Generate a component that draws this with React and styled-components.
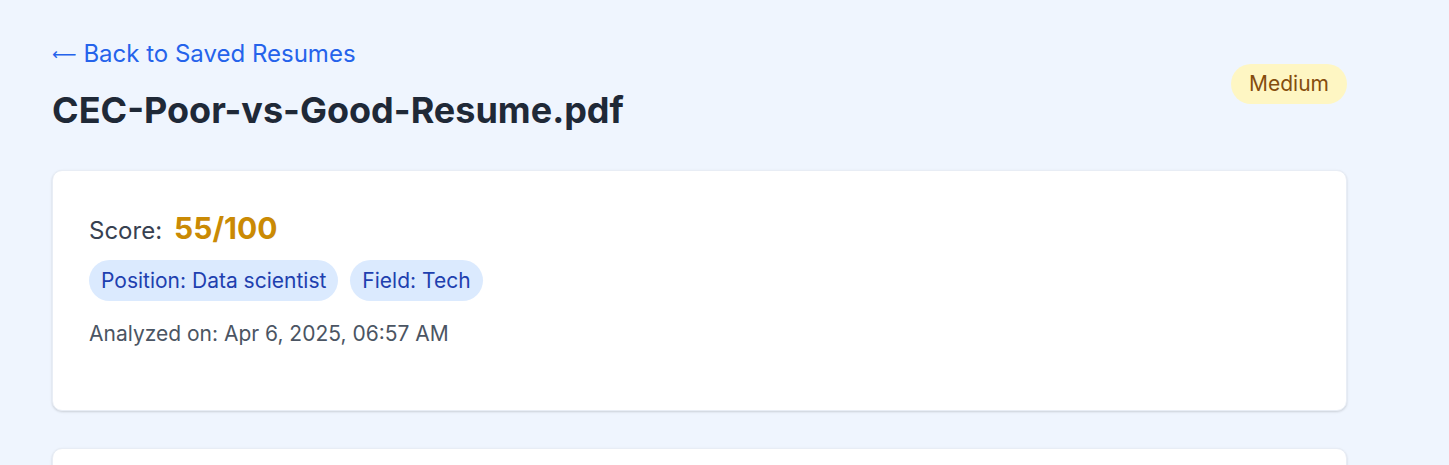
import React from 'react';
import styled, { createGlobalStyle } from 'styled-components';

const resume = {
    name: 'CEC-Poor-vs-Good-Resume.pdf',
    level: 'Medium',
    score: 55,
    position: 'Data scientist',
    field: 'Tech',
    analyzedOn: 'Apr 6, 2025, 06:57 AM',
};

const App = () => {
    return (
        <>
            <GlobalStyle />
            <Page>
                <Header>
                    <TitleBlock>
                        <BackLink href="#">
                            <Arrow>⟵</Arrow>Back to Saved Resumes
                        </BackLink>
                        <Title>{resume.name}</Title>
                    </TitleBlock>
                    <LevelBadge>{resume.level}</LevelBadge>
                </Header>

                {/* Summary card */}
                <Card>
                    <ScoreRow>
                        <ScoreLabel>Score:</ScoreLabel>
                        <ScoreValue>{resume.score}/100</ScoreValue>
                    </ScoreRow>
                    <ChipRow>
                        <Chip>Position: {resume.position}</Chip>
                        <Chip>Field: {resume.field}</Chip>
                    </ChipRow>
                    <Meta>Analyzed on: {resume.analyzedOn}</Meta>
                </Card>

                {/* Next card, cut off by the window */}
                <Card $empty />
            </Page>
        </>
    );
};

export default App;

/* ========== Styled Components ========== */
const GlobalStyle = createGlobalStyle`
  body {
    margin: 0;
    background: #eff5fe;
    font-family: Inter, "Noto Sans", sans-serif;
    overflow: hidden;
  }
`;

const Page = styled.div`
  width: 1295px;
  padding: 38px 0 0 52px;
  display: flex;
  flex-direction: column;
  gap: 37px;
`;

const Header = styled.div`
  display: flex;
  justify-content: space-between;
  align-items: center;
  margin-bottom: 3px;
`;

const TitleBlock = styled.div`
  display: flex;
  flex-direction: column;
  gap: 20px;
`;

const BackLink = styled.a`
  display: flex;
  align-items: center;
  gap: 7px;
  font-size: 24px;
  line-height: 32px;
  color: #2563eb;
  text-decoration: none;
`;

const Arrow = styled.span`
  font-family: "DejaVu Sans", sans-serif;
  font-size: 17px;
`;

const Title = styled.h1`
  margin: 0;
  font-size: 36px;
  line-height: 40px;
  font-weight: 700;
  color: #1f2937;
`;

const LevelBadge = styled.span`
  padding: 6px 18px;
  border-radius: 999px;
  background: #fef6c3;
  color: #854d0e;
  font-size: 21px;
  line-height: 28px;
`;

const Card = styled.div`
  background: #ffffff;
  border-radius: 10px;
  border: 1px solid #e8edf5;
  box-shadow: 0 1px 3px rgba(0, 0, 0, 0.1), 0 1px 2px rgba(0, 0, 0, 0.06);
  padding: 39px 36px 63px;
  min-height: ${(p) => (p.$empty ? '120px' : 'auto')};
`;

const ScoreRow = styled.div`
  display: flex;
  align-items: baseline;
  gap: 12px;
`;

const ScoreLabel = styled.span`
  font-size: 24px;
  color: #374151;
`;

const ScoreValue = styled.span`
  font-size: 30px;
  line-height: 36px;
  font-weight: 700;
  color: #ca8a04;
`;

const ChipRow = styled.div`
  display: flex;
  gap: 12px;
  margin-top: 14px;
`;

const Chip = styled.span`
  padding: 6px 12px;
  border-radius: 999px;
  background: #dbeafe;
  color: #1e40af;
  font-size: 21px;
  line-height: 29px;
`;

const Meta = styled.div`
  margin-top: 20px;
  font-size: 21px;
  line-height: 26px;
  color: #4b5563;
`;
